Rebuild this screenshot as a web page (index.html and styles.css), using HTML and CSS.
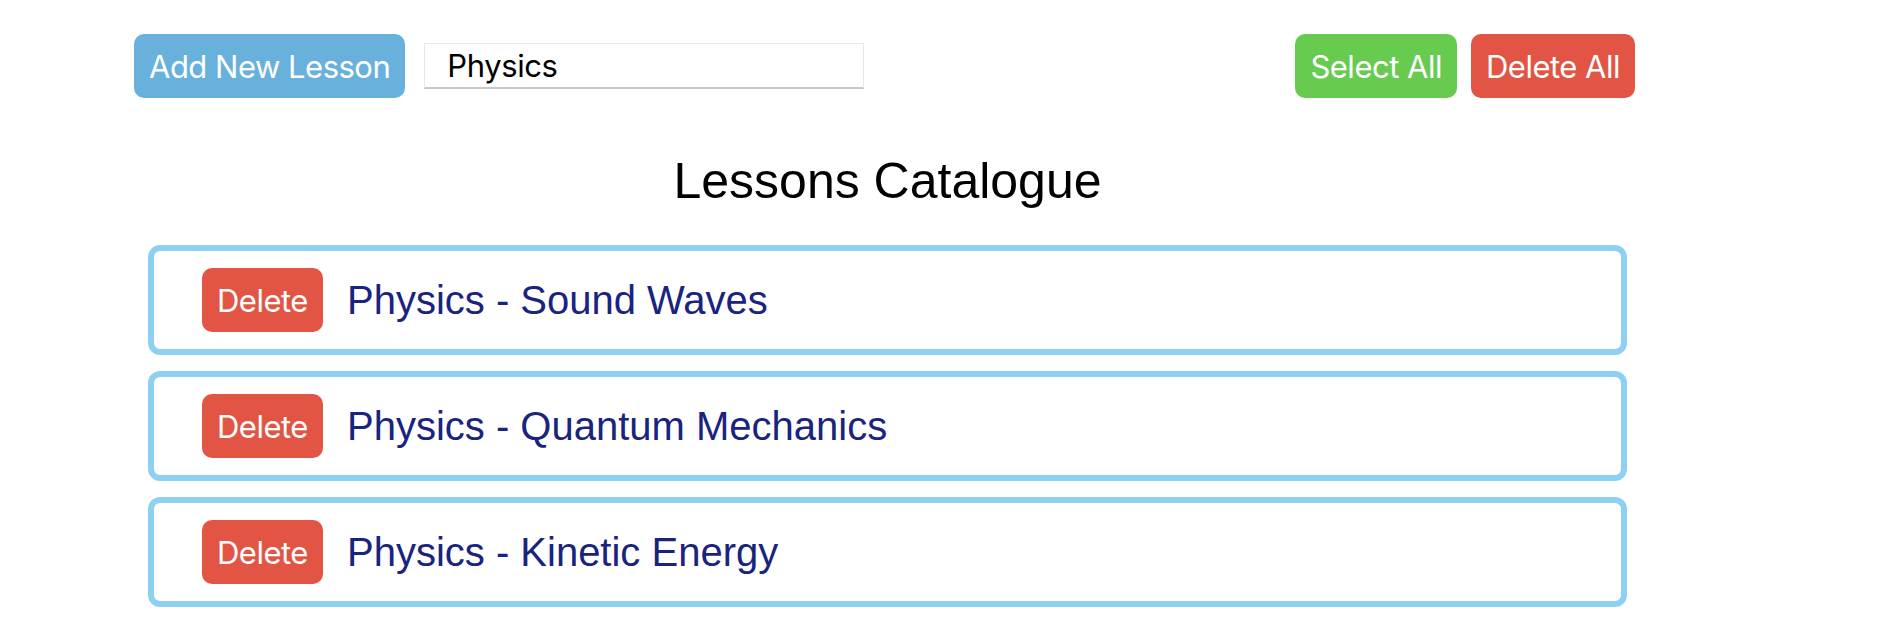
FILE: index.html
```html
<!DOCTYPE html>
<html lang="en">
<head>
<meta charset="utf-8">
<title>Lessons Catalogue</title>
<link rel="stylesheet" href="styles.css">
</head>
<body>
<div class="page">
  <div class="toolbar">
    <div class="toolbar-left">
      <button class="btn btn-blue">Add New Lesson</button>
      <input class="lesson-input" type="text" value="Physics">
    </div>
    <div class="toolbar-right">
      <button class="btn btn-green">Select All</button>
      <button class="btn btn-red">Delete All</button>
    </div>
  </div>
  <section class="catalogue">
    <h2 class="catalogue-title">Lessons Catalogue</h2>
    <ul class="lesson-list">
      <li class="lesson-card">
        <button class="btn btn-red">Delete</button>
        <span class="lesson-name">Physics - Sound Waves</span>
      </li>
      <li class="lesson-card">
        <button class="btn btn-red">Delete</button>
        <span class="lesson-name">Physics - Quantum Mechanics</span>
      </li>
      <li class="lesson-card">
        <button class="btn btn-red">Delete</button>
        <span class="lesson-name">Physics - Kinetic Energy</span>
      </li>
    </ul>
  </section>
</div>
</body>
</html>
```

FILE: styles.css
```css
html, body {
  margin: 0;
  padding: 0;
  background: #ffffff;
}

.page {
  width: 1501px;
  padding: 34px 0 0 134px;
}

.toolbar {
  display: flex;
  justify-content: space-between;
  align-items: center;
}

.toolbar-left,
.toolbar-right {
  display: flex;
  align-items: center;
}

.toolbar-left {
  gap: 19px;
}

.toolbar-right {
  gap: 14px;
}

.btn {
  font-family: Inter, "Liberation Sans", sans-serif;
  font-size: 31px;
  letter-spacing: -0.5px;
  line-height: 38px;
  color: #ffffff;
  border: none;
  border-radius: 10px;
  padding: 14px 15px 12px 15px;
  margin: 0;
  cursor: pointer;
}

.btn-blue {
  background: #68b1dc;
}

.btn-green {
  background: #67cb4f;
}

.btn-red {
  background: #e25443;
}

.lesson-input {
  box-sizing: border-box;
  width: 440px;
  height: 46px;
  margin: 0 0 1px 0;
  padding: 0 20px 0 22px;
  font-family: Inter, "Liberation Sans", sans-serif;
  font-size: 31px;
  letter-spacing: -0.4px;
  color: #000000;
  border: 1px solid #e8e8e8;
  border-bottom: 2px solid #c9c9c9;
  border-radius: 0;
  outline: none;
  background: #ffffff;
}

.catalogue {
  margin: 54px 8px 0 14px;
}

.catalogue-title {
  margin: 0 0 35px 0;
  text-align: center;
  font-family: "Liberation Sans", Arial, sans-serif;
  font-weight: normal;
  font-size: 50px;
  line-height: 58px;
  color: #000000;
}

.lesson-list {
  list-style: none;
  margin: 0;
  padding: 0;
  display: flex;
  flex-direction: column;
  gap: 16px;
}

.lesson-card {
  display: flex;
  align-items: center;
  gap: 24px;
  height: 110px;
  box-sizing: border-box;
  padding: 0 0 0 48px;
  border: 6px solid #8ed0f2;
  border-radius: 12px;
}

.lesson-name {
  font-family: "Liberation Sans", Arial, sans-serif;
  font-size: 40px;
  color: #1a237e;
}
```
